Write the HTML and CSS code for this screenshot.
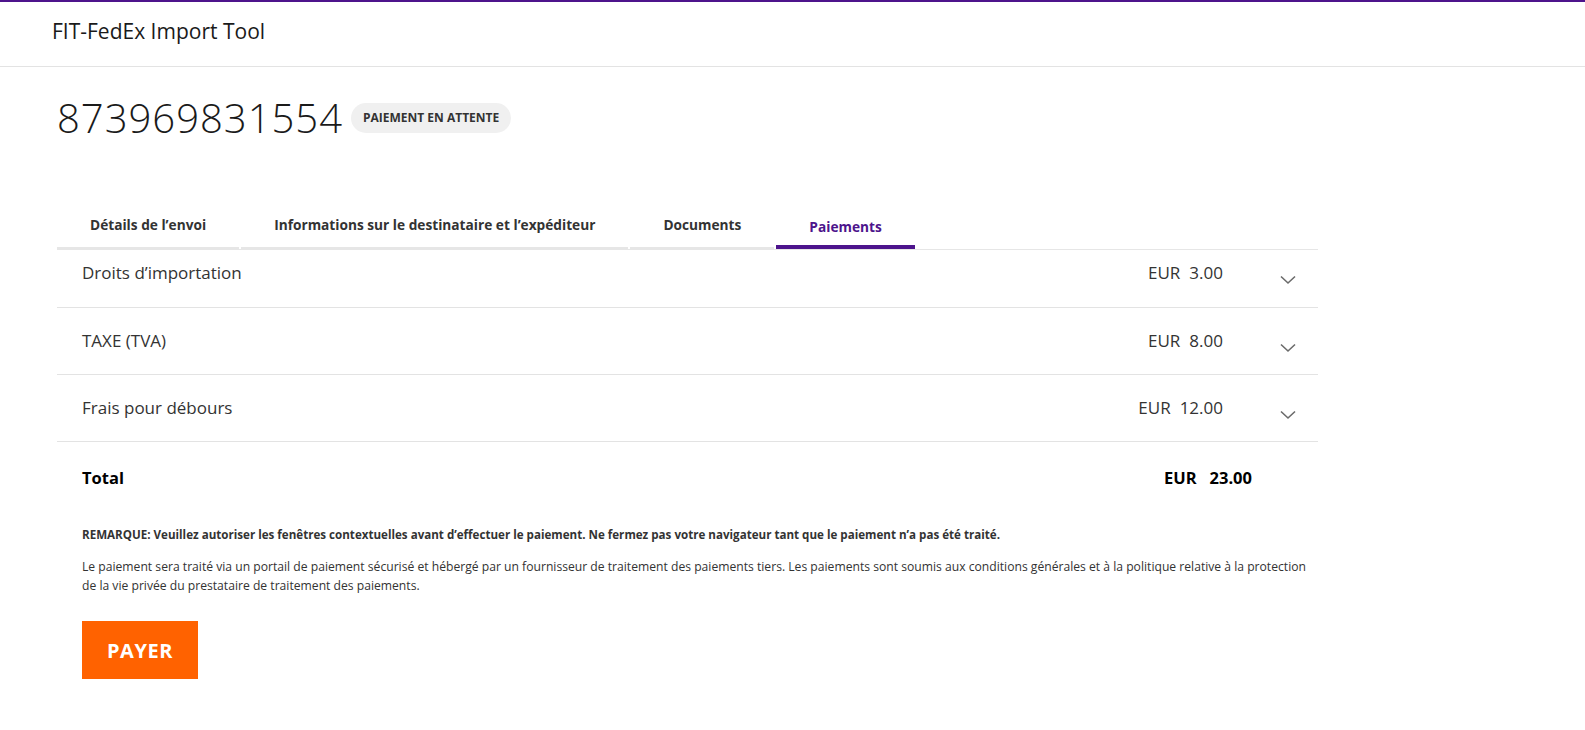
FILE: index.html
```html
<!DOCTYPE html>
<html lang="fr">
<head>
<meta charset="utf-8">
<title>FIT-FedEx Import Tool</title>
<link rel="stylesheet" href="styles.css">
</head>
<body>
<header class="topbar">
  <span class="app-name">FIT-FedEx Import Tool</span>
</header>
<main class="content">
  <div class="title-row">
    <h1 class="tracking">873969831554</h1>
    <span class="badge">PAIEMENT EN ATTENTE</span>
  </div>
  <nav class="tabs">
    <span class="tab">Détails de l’envoi</span>
    <span class="tab">Informations sur le destinataire et l’expéditeur</span>
    <span class="tab">Documents</span>
    <span class="tab active">Paiements</span>
  </nav>
  <div class="charges">
    <div class="charge first">
      <span class="label">Droits d’importation</span>
      <span class="amount"><span class="cur">EUR</span>3.00</span>
      <span class="chev"><svg width="16" height="10" viewBox="0 0 16 10"><path d="M1 1.5 L8 8 L15 1.5" fill="none" stroke="#6b6b6b" stroke-width="1.6"/></svg></span>
    </div>
    <div class="charge">
      <span class="label">TAXE (TVA)</span>
      <span class="amount"><span class="cur">EUR</span>8.00</span>
      <span class="chev"><svg width="16" height="10" viewBox="0 0 16 10"><path d="M1 1.5 L8 8 L15 1.5" fill="none" stroke="#6b6b6b" stroke-width="1.6"/></svg></span>
    </div>
    <div class="charge">
      <span class="label">Frais pour débours</span>
      <span class="amount"><span class="cur">EUR</span>12.00</span>
      <span class="chev"><svg width="16" height="10" viewBox="0 0 16 10"><path d="M1 1.5 L8 8 L15 1.5" fill="none" stroke="#6b6b6b" stroke-width="1.6"/></svg></span>
    </div>
    <div class="total">
      <span class="label">Total</span>
      <span class="amount"><span class="cur">EUR</span>23.00</span>
    </div>
  </div>
  <div class="notes">
    <p class="remark">REMARQUE: Veuillez autoriser les fenêtres contextuelles avant d’effectuer le paiement. Ne fermez pas votre navigateur tant que le paiement n’a pas été traité.</p>
    <p class="info">Le paiement sera traité via un portail de paiement sécurisé et hébergé par un fournisseur de traitement des paiements tiers. Les paiements sont soumis aux conditions générales et à la politique relative à la protection de la vie privée du prestataire de traitement des paiements.</p>
    <button class="pay">PAYER</button>
  </div>
</main>
</body>
</html>
```
FILE: styles.css
```css
* { box-sizing: border-box; }
html, body { margin: 0; padding: 0; background: #fff; }
body {
  font-family: "Open Sans", "Lato", "Liberation Sans", sans-serif;
  color: #333;
}
.topbar {
  border-top: 2px solid #4d148c;
  height: 67px;
  border-bottom: 1px solid #e3e3e3;
  display: flex;
  align-items: center;
  padding-left: 52px;
  padding-bottom: 7px;
}
.app-name {
  font-size: 21px;
  color: #1a1a1a;
}
.content {
  margin-left: 57px;
  width: 1261px;
}
.title-row {
  display: flex;
  align-items: center;
  gap: 8px;
  margin-top: 31px;
  height: 38px;
}
.tracking {
  margin: 0;
  font-size: 40px;
  font-weight: 300;
  color: #1a1a1a;
  letter-spacing: 1px;
}
.badge {
  background: #f0f0f0;
  border-radius: 16px;
  padding: 8px 12px;
  line-height: 14px;
  font-size: 12px;
  font-weight: 700;
  color: #333;
  margin-top: 2px;
}
.tabs {
  display: flex;
  gap: 2px;
  margin-top: 73px;
}
.tab {
  padding: 6px 33px 12px;
  font-size: 13.7px;
  font-weight: 700;
  color: #333;
  border-bottom: 2px solid #e6e6e6;
  line-height: 20px;
}
.tab.active {
  color: #4d148c;
  border-bottom: 4px solid #4d148c;
  padding-top: 8px;
  padding-bottom: 8px;
}
.charges {
  border-top: 1px solid #e6e6e6;
}
.charge {
  display: flex;
  align-items: center;
  padding: 23px 0 23px 25px;
  border-bottom: 1px solid #e3e3e3;
  line-height: 20px;
  height: 67px;
}
.charge.first { padding-top: 13px; padding-bottom: 24px; height: 58px; }
.label {
  flex: 1;
  font-size: 17px;
  color: #333;
}
.amount {
  font-size: 17px;
  color: #333;
}
.cur {
  margin-right: 9px;
}
.chev {
  width: 95px;
  height: 20px;
  padding-left: 57px;
  display: flex;
  align-items: center;
}
.chev svg {
  transform: translateY(7px);
}
.total {
  display: flex;
  align-items: center;
  padding: 25px 66px 0 25px;
  line-height: 22px;
}
.total .label, .total .amount {
  font-size: 16.5px;
  font-weight: 700;
  color: #000;
}
.total .cur { margin-right: 13px; }
.notes {
  padding-left: 25px;
  padding-top: 38px;
}
.remark {
  margin: 0;
  font-size: 11.6px;
  font-weight: 700;
  color: #333;
  line-height: 16px;
}
.info {
  margin: 14px 0 0;
  font-size: 12.15px;
  line-height: 19px;
  color: #333;
}
.pay {
  margin-top: 26px;
  width: 116px;
  height: 58px;
  border: none;
  background: #ff6200;
  color: #fff;
  font-family: inherit;
  font-size: 20px;
  font-weight: 700;
  letter-spacing: 0.6px;
  cursor: pointer;
}
```
